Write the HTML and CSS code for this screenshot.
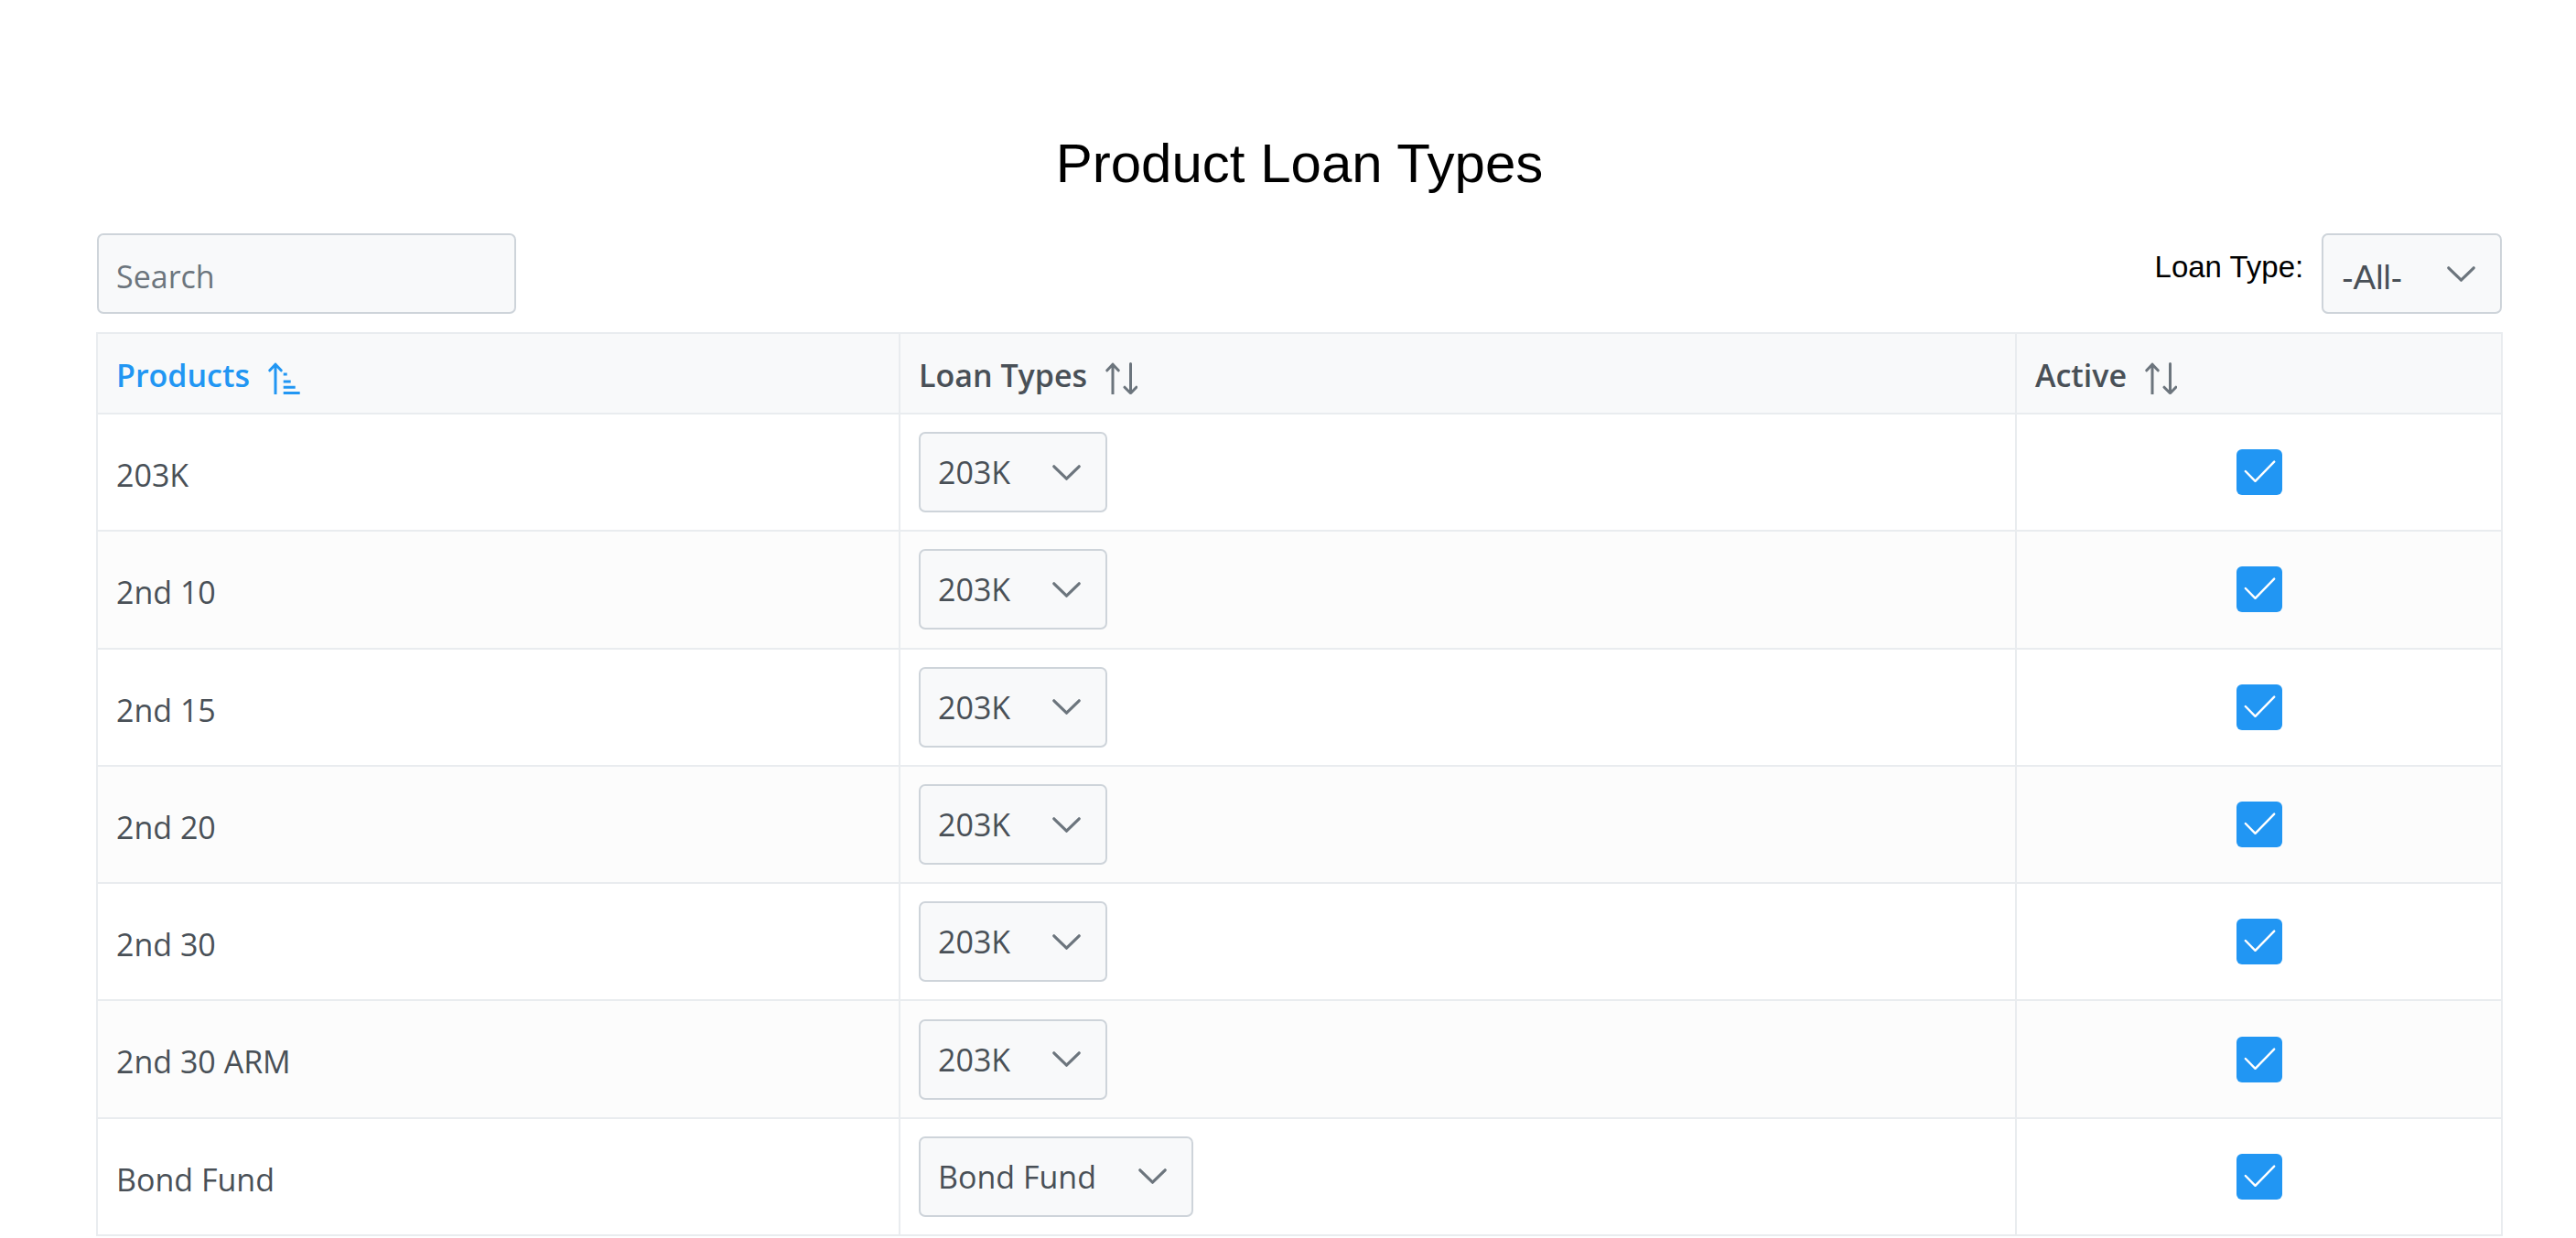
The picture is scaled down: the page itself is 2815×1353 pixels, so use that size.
FILE: index.html
```html
<!DOCTYPE html>
<html lang="en">
<head>
<meta charset="utf-8">
<title>Product Loan Types</title>
<link rel="stylesheet" href="styles.css">
</head>
<body>
<div class="page">
  <h1 class="title">Product Loan Types</h1>
  <div class="toolbar">
    <input class="search" type="text" placeholder="Search">
    <div class="filter">
      <span class="filter-label">Loan Type:</span>
      <div class="dd dd-filter">
        <span class="dd-label">-All-</span>
        <span class="dd-trigger"><svg class="chev" width="31" height="17" viewBox="0 0 31 17"><polyline points="1.8,1.8 15.5,15.2 29.2,1.8"/></svg></span>
      </div>
    </div>
  </div>

  <div class="grid">
    <div class="row head">
      <div class="cell hcell sorted">Products
        <svg class="sort-icon" width="35" height="35" viewBox="0 0 35 35"><path d="M8 34.5V2M1.8 8.8L8 2.2l6.2 6.6"/><path class="bar" d="M16.7 13h4M16.7 21h8M16.7 27.2h13M16.7 33.5h18"/></svg>
      </div>
      <div class="cell hcell">Loan Types
        <svg class="sort-icon" width="35" height="35" viewBox="0 0 35 35"><path d="M8 34.5V2M1.8 8.8L8 2.2l6.2 6.6"/><path d="M27.5 1.5V33.5M21 27.2l6.5 6.6 6.3-6.6"/></svg>
      </div>
      <div class="cell hcell">Active
        <svg class="sort-icon" width="35" height="35" viewBox="0 0 35 35"><path d="M8 34.5V2M1.8 8.8L8 2.2l6.2 6.6"/><path d="M27.5 1.5V33.5M21 27.2l6.5 6.6 6.3-6.6"/></svg>
      </div>
    </div>

    <div class="row">
      <div class="cell name">203K</div>
      <div class="cell"><div class="dd"><span class="dd-label">203K</span><span class="dd-trigger"><svg class="chev" width="31" height="17" viewBox="0 0 31 17"><polyline points="1.8,1.8 15.5,15.2 29.2,1.8"/></svg></span></div></div>
      <div class="cell center"><span class="check"><svg width="50" height="50" viewBox="0 0 50 50"><polyline points="9.8,24 20.5,34.8 41.2,13.6"/></svg></span></div>
    </div>
    <div class="row striped">
      <div class="cell name">2nd 10</div>
      <div class="cell"><div class="dd"><span class="dd-label">203K</span><span class="dd-trigger"><svg class="chev" width="31" height="17" viewBox="0 0 31 17"><polyline points="1.8,1.8 15.5,15.2 29.2,1.8"/></svg></span></div></div>
      <div class="cell center"><span class="check"><svg width="50" height="50" viewBox="0 0 50 50"><polyline points="9.8,24 20.5,34.8 41.2,13.6"/></svg></span></div>
    </div>
    <div class="row">
      <div class="cell name">2nd 15</div>
      <div class="cell"><div class="dd"><span class="dd-label">203K</span><span class="dd-trigger"><svg class="chev" width="31" height="17" viewBox="0 0 31 17"><polyline points="1.8,1.8 15.5,15.2 29.2,1.8"/></svg></span></div></div>
      <div class="cell center"><span class="check"><svg width="50" height="50" viewBox="0 0 50 50"><polyline points="9.8,24 20.5,34.8 41.2,13.6"/></svg></span></div>
    </div>
    <div class="row striped">
      <div class="cell name">2nd 20</div>
      <div class="cell"><div class="dd"><span class="dd-label">203K</span><span class="dd-trigger"><svg class="chev" width="31" height="17" viewBox="0 0 31 17"><polyline points="1.8,1.8 15.5,15.2 29.2,1.8"/></svg></span></div></div>
      <div class="cell center"><span class="check"><svg width="50" height="50" viewBox="0 0 50 50"><polyline points="9.8,24 20.5,34.8 41.2,13.6"/></svg></span></div>
    </div>
    <div class="row">
      <div class="cell name">2nd 30</div>
      <div class="cell"><div class="dd"><span class="dd-label">203K</span><span class="dd-trigger"><svg class="chev" width="31" height="17" viewBox="0 0 31 17"><polyline points="1.8,1.8 15.5,15.2 29.2,1.8"/></svg></span></div></div>
      <div class="cell center"><span class="check"><svg width="50" height="50" viewBox="0 0 50 50"><polyline points="9.8,24 20.5,34.8 41.2,13.6"/></svg></span></div>
    </div>
    <div class="row striped">
      <div class="cell name">2nd 30 ARM</div>
      <div class="cell"><div class="dd"><span class="dd-label">203K</span><span class="dd-trigger"><svg class="chev" width="31" height="17" viewBox="0 0 31 17"><polyline points="1.8,1.8 15.5,15.2 29.2,1.8"/></svg></span></div></div>
      <div class="cell center"><span class="check"><svg width="50" height="50" viewBox="0 0 50 50"><polyline points="9.8,24 20.5,34.8 41.2,13.6"/></svg></span></div>
    </div>
    <div class="row">
      <div class="cell name">Bond Fund</div>
      <div class="cell"><div class="dd"><span class="dd-label">Bond Fund</span><span class="dd-trigger"><svg class="chev" width="31" height="17" viewBox="0 0 31 17"><polyline points="1.8,1.8 15.5,15.2 29.2,1.8"/></svg></span></div></div>
      <div class="cell center"><span class="check"><svg width="50" height="50" viewBox="0 0 50 50"><polyline points="9.8,24 20.5,34.8 41.2,13.6"/></svg></span></div>
    </div>
  </div>
</div>
</body>
</html>
```
FILE: styles.css
```css
html, body {
  margin: 0;
  padding: 0;
  background: #ffffff;
}

.page {
  margin-left: 105px;
  width: 2630px;
  padding-top: 144px;
  font-family: "Open Sans", "Noto Sans", sans-serif;
  color: #495057;
}

.title {
  margin: 0 0 41px;
  text-align: center;
  font-family: "Liberation Sans", Arial, sans-serif;
  font-weight: 400;
  font-size: 60px;
  line-height: 70px;
  color: #000000;
}

.toolbar {
  display: flex;
  justify-content: space-between;
  align-items: center;
  height: 88px;
  margin-bottom: 20px;
}

.search {
  box-sizing: border-box;
  width: 458px;
  height: 88px;
  margin: 0 0 0 1px;
  padding: 6px 19px 0;
  border: 2px solid #ced4da;
  border-radius: 7px;
  background: #f8f9fa;
  font-family: "Open Sans", "Noto Sans", sans-serif;
  font-size: 34px;
  color: #495057;
  outline: none;
}

.search::placeholder {
  color: #6c757d;
}

.filter {
  display: flex;
  align-items: center;
  gap: 20px;
  margin-right: 1px;
}

.filter-label {
  font-family: "Liberation Sans", Arial, sans-serif;
  font-size: 33px;
  line-height: 38px;
  color: #000000;
  margin-bottom: 14px;
}

.dd {
  display: inline-flex;
  box-sizing: border-box;
  height: 88px;
  border: 2px solid #ced4da;
  border-radius: 7px;
  background: #f8f9fa;
}

.dd-label {
  padding: 0 19px;
  font-size: 34px;
  line-height: 84px;
  color: #495057;
  white-space: nowrap;
}

.dd-filter .dd-label {
  padding: 9px 22px 0 20px;
  font-family: "Liberation Sans", Arial, sans-serif;
  font-size: 37px;
  line-height: 75px;
}

.dd-trigger {
  width: 85px;
  display: flex;
  align-items: center;
  justify-content: center;
}

.chev polyline {
  fill: none;
  stroke: #6c757d;
  stroke-width: 3.2;
  stroke-linecap: round;
  stroke-linejoin: round;
}

.grid {
  border-left: 2px solid #e9ecef;
  border-top: 2px solid #e9ecef;
}

.row {
  display: grid;
  grid-template-columns: 877px 1220px 531px;
  background: #ffffff;
}

.row.striped {
  background: #fcfcfc;
}

.row.head {
  background: #f8f9fa;
}

.cell {
  box-sizing: border-box;
  display: flex;
  align-items: center;
  padding: 19.15px 20px;
  min-height: 128.3px;
  border-right: 2px solid #e9ecef;
  border-bottom: 2px solid #e9ecef;
  font-size: 34px;
  line-height: 46px;
  white-space: nowrap;
}

.cell.name {
  padding-top: 22px;
  padding-bottom: 16.3px;
}

.hcell {
  min-height: 0;
  padding: 24px 20px 20px;
  line-height: 42px;
  font-weight: 600;
  color: #495057;
}

.hcell.sorted {
  color: #2196f3;
}

.sort-icon {
  align-self: flex-end;
  margin-left: 20px;
  fill: none;
  stroke: #6c757d;
  stroke-width: 3;
  stroke-linecap: round;
  stroke-linejoin: round;
}

.sorted .sort-icon {
  stroke: #2196f3;
}

.sort-icon .bar {
  stroke-linecap: butt;
}

.center {
  justify-content: center;
}

.check {
  display: block;
  width: 50px;
  height: 50px;
  border-radius: 6px;
  background: #2196f3;
}

.check svg {
  display: block;
}

.check polyline {
  fill: none;
  stroke: #ffffff;
  stroke-width: 2.4;
  stroke-linecap: round;
  stroke-linejoin: round;
}
```
